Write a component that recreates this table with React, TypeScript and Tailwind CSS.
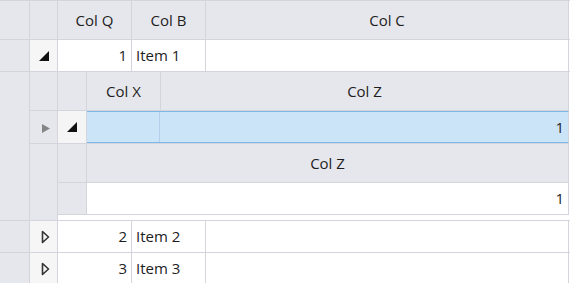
const LINE = 'border-[#d4d4dd]'
const HEAD = 'bg-[#e6e7ec]'
const TXT = 'text-[15px] text-[#1e1e1e] leading-none'

function Filled() {
  return (
    <svg width="12" height="12" viewBox="0 0 12 12" aria-hidden="true">
      <polygon points="11,1 11,11 1,11" fill="#111" />
    </svg>
  )
}

function Arrow() {
  return (
    <svg width="10" height="11" viewBox="0 0 10 11" aria-hidden="true">
      <polygon points="1,1 9,5.5 1,10" fill="#858585" />
    </svg>
  )
}

function Hollow() {
  return (
    <svg width="9" height="14" viewBox="0 0 9 14" aria-hidden="true">
      <polygon points="1.5,1.5 7.5,7 1.5,12.5" fill="none" stroke="#333" strokeWidth="1.6" strokeLinejoin="round" />
    </svg>
  )
}

function HeadCell({ w, label }: { w: string; label?: string }) {
  return (
    <div className={`${w} h-full ${HEAD} ${LINE} border-r flex items-center justify-center ${TXT}`}>
      {label}
    </div>
  )
}

function DataRow({ id, item, expanded }: { id: number; item: string; expanded?: boolean }) {
  return (
    <div className={`flex h-[32px] border-b ${LINE}`}>
      <div className={`w-[30px] h-full ${HEAD} border-r ${LINE}`} />
      <div className={`w-[28px] h-full bg-[#f6f6f6] border-r ${LINE} flex items-center justify-center ${expanded ? '' : 'pl-[3px]'}`}>
        {expanded ? <Filled /> : <Hollow />}
      </div>
      <div className={`w-[74px] h-full bg-white border-r ${LINE} flex items-center justify-end pr-[4px] ${TXT}`}>{id}</div>
      <div className={`w-[74px] h-full bg-white border-r ${LINE} flex items-center pl-[4px] ${TXT}`}>{item}</div>
      <div className={`w-[363px] h-full bg-white border-r ${LINE}`} />
    </div>
  )
}

function NestedDetail() {
  return (
    <div className={`flex h-[77px] border-t ${LINE}`}>
      <div className={`w-[28px] h-full ${HEAD} border-r ${LINE}`} />
      <div className="w-[511px] h-full bg-white">
        <div className={`flex h-[39px] border-b ${LINE}`}>
          <HeadCell w="w-[29px]" />
          <HeadCell w="w-[482px]" label="Col Z" />
        </div>
        <div className={`flex h-[32px] border-b ${LINE}`}>
          <div className={`w-[29px] h-full ${HEAD} border-r ${LINE}`} />
          <div className={`w-[482px] h-full bg-white border-r ${LINE} flex items-center justify-end pr-[4px] ${TXT}`}>1</div>
        </div>
      </div>
    </div>
  )
}

function NestedGrid() {
  return (
    <div className="w-[539px] h-full flex flex-col">
      <div className={`flex h-[39px] border-b ${LINE}`}>
        <HeadCell w="w-[28px]" />
        <HeadCell w="w-[29px]" />
        <HeadCell w="w-[74px]" label="Col X" />
        <HeadCell w="w-[408px]" label="Col Z" />
      </div>
      <div className="flex h-[32px]">
        <div className={`w-[28px] h-full ${HEAD} border-r ${LINE} flex items-center justify-center pl-[5px] pt-[3px]`}>
          <Arrow />
        </div>
        <div className={`w-[29px] h-full bg-[#f5f5f5] border-r ${LINE} flex items-center justify-center`}>
          <Filled />
        </div>
        <div className="flex-1 h-full flex bg-[#cce4f7] border-y border-[#7db8e8] border-r-[#d4d4dd] border-r">
          <div className="w-[73px] h-full border-r border-[#b3d0e8]" />
          <div className={`flex-1 flex items-center justify-end pr-[4px] ${TXT}`}>1</div>
        </div>
      </div>
      <NestedDetail />
    </div>
  )
}

export default function App() {
  return (
    <div className="w-[570px] h-[283px] overflow-hidden bg-white font-['Open_Sans',sans-serif]">
      <div className={`border-t ${LINE}`}>
        <div className={`flex h-[39px] border-b ${LINE}`}>
          <HeadCell w="w-[30px]" />
          <HeadCell w="w-[28px]" />
          <HeadCell w="w-[74px]" label="Col Q" />
          <HeadCell w="w-[74px]" label="Col B" />
          <HeadCell w="w-[363px]" label="Col C" />
        </div>
        <DataRow id={1} item="Item 1" expanded />
        <div className={`flex h-[149px] border-b ${LINE}`}>
          <div className={`w-[30px] h-full ${HEAD} border-r ${LINE}`} />
          <NestedGrid />
        </div>
        <DataRow id={2} item="Item 2" />
        <DataRow id={3} item="Item 3" />
      </div>
    </div>
  )
}
